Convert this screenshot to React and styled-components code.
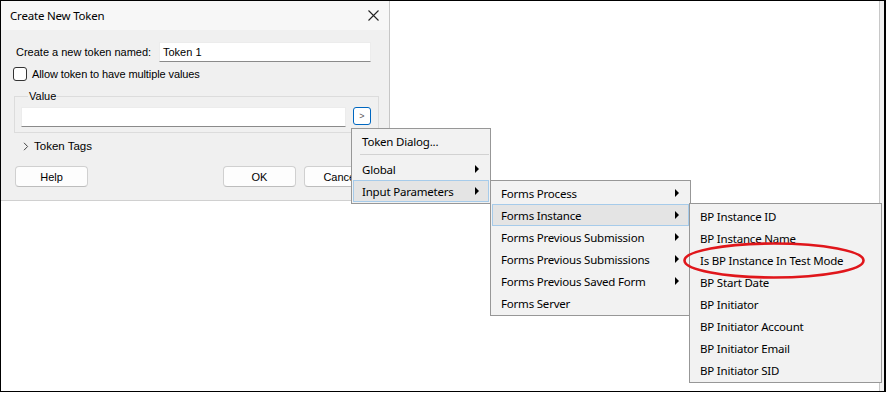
import React from "react";
import styled, { createGlobalStyle } from "styled-components";

const GlobalStyle = createGlobalStyle`
  body {
    margin: 0;
    font-family: "Noto Sans", "Open Sans", sans-serif;
    font-size: 11.5px;
    letter-spacing: -0.2px;
    color: #000;
  }
`;

const Frame = styled.div`
  position: relative;
  width: 886px;
  height: 392px;
  box-sizing: border-box;
  border: 1px solid #000;
  border-right-width: 2px;
  background: #fff;
  display: flex;
  overflow: hidden;
`;

const Canvas = styled.div`
  flex: 1;
`;

const EdgeStrip = styled.div`
  width: 4px;
  border-left: 1px solid #c8c8c8;
  background: #f0f0f0;
`;

const Dialog = styled.div`
  width: 388px;
  height: 199px;
  background: #f0f0f0;
  border-right: 1px solid #c6c6c6;
  border-bottom: 1px solid #d0d0d0;
  display: flex;
  flex-direction: column;
`;

const TitleBar = styled.div`
  height: 29px;
  background: #f7f7f7;
  display: flex;
  align-items: center;
  justify-content: space-between;
  padding: 0 10px 0 9px;
`;

const Body = styled.div`
  display: flex;
  flex-direction: column;
  padding: 12px 0 0 12px;
  font-family: "Liberation Sans", Arial, sans-serif;
  font-size: 11px;
  letter-spacing: 0;
`;

const NameRow = styled.div`
  display: flex;
  align-items: center;
  height: 20px;
  padding-left: 3px;
`;

const Label = styled.span`
  width: 143px;
  white-space: nowrap;
`;

const TextBox = styled.div`
  box-sizing: border-box;
  width: ${(p) => p.w}px;
  height: 20px;
  background: #fff;
  border: 1px solid #ececec;
  border-bottom-color: #8a8a8a;
  display: flex;
  align-items: center;
  padding-left: 3px;
`;

const CheckRow = styled.label`
  display: flex;
  align-items: center;
  gap: 5px;
  margin-top: 5px;
  height: 14px;
  letter-spacing: -0.1px;
`;

const Check = styled.span`
  box-sizing: border-box;
  width: 14px;
  height: 14px;
  border: 1px solid #333;
  border-radius: 3px;
  background: #fff;
`;

const Group = styled.fieldset`
  box-sizing: border-box;
  width: 365px;
  height: 44px;
  margin: 8px 0 0 1px;
  padding: 4px 7px 0 6px;
  border: 1px solid #dcdcdc;
  border-radius: 0;
  display: flex;
  align-items: flex-start;
  gap: 7px;
`;

const Legend = styled.legend`
  padding: 0 1px;
  margin-left: 7px;
  line-height: 14px;
`;

const ExpandButton = styled.div`
  box-sizing: border-box;
  width: 18px;
  height: 18px;
  border: 1px solid #0067c0;
  border-radius: 3px;
  background: #fff;
  display: flex;
  align-items: center;
  justify-content: center;
  font-size: 9px;
  color: #555;
`;

const TagsRow = styled.div`
  display: flex;
  align-items: center;
  gap: 5px;
  margin: 5px 0 0 10px;
  height: 16px;
  font-size: 11.5px;
`;

const ButtonRow = styled.div`
  display: flex;
  margin-top: 12px;
  padding-left: 2px;
`;

const Button = styled.div`
  box-sizing: border-box;
  width: 73px;
  height: 21px;
  background: #fdfdfd;
  border: 1px solid #d0d0d0;
  border-bottom-color: #bdbdbd;
  border-radius: 4px;
  display: flex;
  align-items: center;
  justify-content: center;
  margin-left: ${(p) => p.gap || 0}px;
`;

const Menu = styled.div`
  position: absolute;
  left: ${(p) => p.x}px;
  top: ${(p) => p.y}px;
  width: ${(p) => p.w}px;
  box-sizing: border-box;
  background: #f2f2f2;
  border: 1px solid #979797;
  padding: 1px;
  z-index: ${(p) => p.z};
`;

const Item = styled.div`
  box-sizing: border-box;
  height: 22px;
  display: flex;
  align-items: center;
  justify-content: space-between;
  padding: 0 9px 0 8px;
  border: 1px solid ${(p) => (p.active ? "#a6cbea" : "transparent")};
  background: ${(p) => (p.active ? "#e4e4e4" : "transparent")};
  white-space: nowrap;
`;

const Separator = styled.div`
  height: 1px;
  background: #d2d2d2;
  margin: 2px 0 3px 7px;
`;

const Arrow = styled.span`
  width: 0;
  height: 0;
  border-top: 4px solid transparent;
  border-bottom: 4px solid transparent;
  border-left: 4px solid #000;
`;

const Annotation = styled.svg`
  position: absolute;
  left: 680px;
  top: 239px;
  z-index: 10;
  pointer-events: none;
`;

const CloseIcon = () => (
  <svg width="11" height="11" viewBox="0 0 11 11">
    <path d="M0.5 0.5 L10.5 10.5 M10.5 0.5 L0.5 10.5" stroke="#222" strokeWidth="1.1" />
  </svg>
);

const Chevron = () => (
  <svg width="6" height="9" viewBox="0 0 6 9">
    <path d="M1 0.8 L4.6 4.5 L1 8.2" fill="none" stroke="#444" strokeWidth="1" />
  </svg>
);

const formsItems = [
  { label: "Forms Process", sub: true },
  { label: "Forms Instance", sub: true, active: true },
  { label: "Forms Previous Submission", sub: true },
  { label: "Forms Previous Submissions", sub: true },
  { label: "Forms Previous Saved Form", sub: true },
  { label: "Forms Server" },
];

const instanceItems = [
  "BP Instance ID",
  "BP Instance Name",
  "Is BP Instance In Test Mode",
  "BP Start Date",
  "BP Initiator",
  "BP Initiator Account",
  "BP Initiator Email",
  "BP Initiator SID",
];

export default function App() {
  return (
    <>
      <GlobalStyle />
      <Frame>
        <Canvas>
          <Dialog>
            <TitleBar>
              <span>Create New Token</span>
              <CloseIcon />
            </TitleBar>
            <Body>
              <NameRow>
                <Label>Create a new token named:</Label>
                <TextBox w={212}>Token 1</TextBox>
              </NameRow>
              <CheckRow>
                <Check />
                Allow token to have multiple values
              </CheckRow>
              <Group>
                <Legend>Value</Legend>
                <TextBox w={325} />
                <ExpandButton>&gt;</ExpandButton>
              </Group>
              <TagsRow>
                <Chevron />
                Token Tags
              </TagsRow>
              <ButtonRow>
                <Button>Help</Button>
                <Button gap={135}>OK</Button>
                <Button gap={8}>Cancel</Button>
              </ButtonRow>
            </Body>
          </Dialog>
        </Canvas>
        <EdgeStrip />

        <Menu x={350} y={127} w={140} z={2}>
          <Item>Token Dialog...</Item>
          <Separator />
          <Item>
            Global <Arrow />
          </Item>
          <Item active>
            Input Parameters <Arrow />
          </Item>
        </Menu>

        <Menu x={489} y={179} w={201} z={3}>
          {formsItems.map((it) => (
            <Item key={it.label} active={it.active}>
              {it.label}
              {it.sub && <Arrow />}
            </Item>
          ))}
        </Menu>

        <Menu x={688} y={202} w={193} z={4}>
          {instanceItems.map((label) => (
            <Item key={label}>{label}</Item>
          ))}
        </Menu>

        <Annotation width="190" height="42" viewBox="0 0 190 42">
          <ellipse cx="93" cy="20.5" rx="89.5" ry="17" fill="none" stroke="#e0161b" strokeWidth="2.6" />
        </Annotation>
      </Frame>
    </>
  );
}
